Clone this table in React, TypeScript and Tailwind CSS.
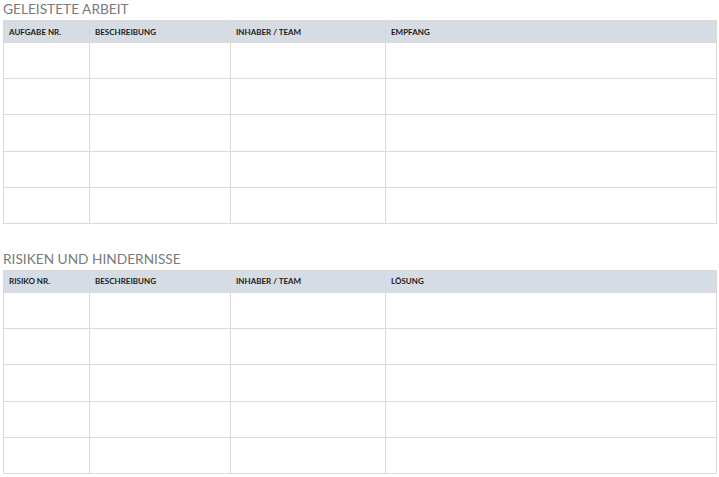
import React from 'react';

const COLS = ['w-[86px]', 'w-[141px]', 'w-[155px]', 'w-auto'];

function Section({ title, headers }: { title: string; headers: string[] }) {
    return (
        <div>
            <h2 className="text-[13.7px] leading-[17px] font-normal text-[#7a7a7a] mb-[3px]">{title}</h2>
            <table className="w-[714px] border-collapse table-fixed">
                <thead>
                    <tr className="bg-[#d6dce4] h-[22px]">
                        {headers.map((h, i) => (
                            <th
                                key={h}
                                className={`${COLS[i]} border border-[#d9d9d9] px-[5px] text-left text-[8px] font-bold text-[#1a1a1a] align-middle`}
                            >
                                {h}
                            </th>
                        ))}
                    </tr>
                </thead>
                <tbody>
                    {[0, 1, 2, 3, 4].map((r) => (
                        <tr key={r} className="h-[36.2px]">
                            {headers.map((h) => (
                                <td key={h} className="border border-[#d9d9d9]"></td>
                            ))}
                        </tr>
                    ))}
                </tbody>
            </table>
        </div>
    );
}

export default function App() {
    return (
        <div className="w-[719px] h-[477px] bg-white pl-[3px] font-['Lato',sans-serif] flex flex-col gap-[26px]">
            <Section title="GELEISTETE ARBEIT" headers={['AUFGABE NR.', 'BESCHREIBUNG', 'INHABER / TEAM', 'EMPFANG']} />
            <Section title="RISIKEN UND HINDERNISSE" headers={['RISIKO NR.', 'BESCHREIBUNG', 'INHABER / TEAM', 'LÖSUNG']} />
        </div>
    );
}
